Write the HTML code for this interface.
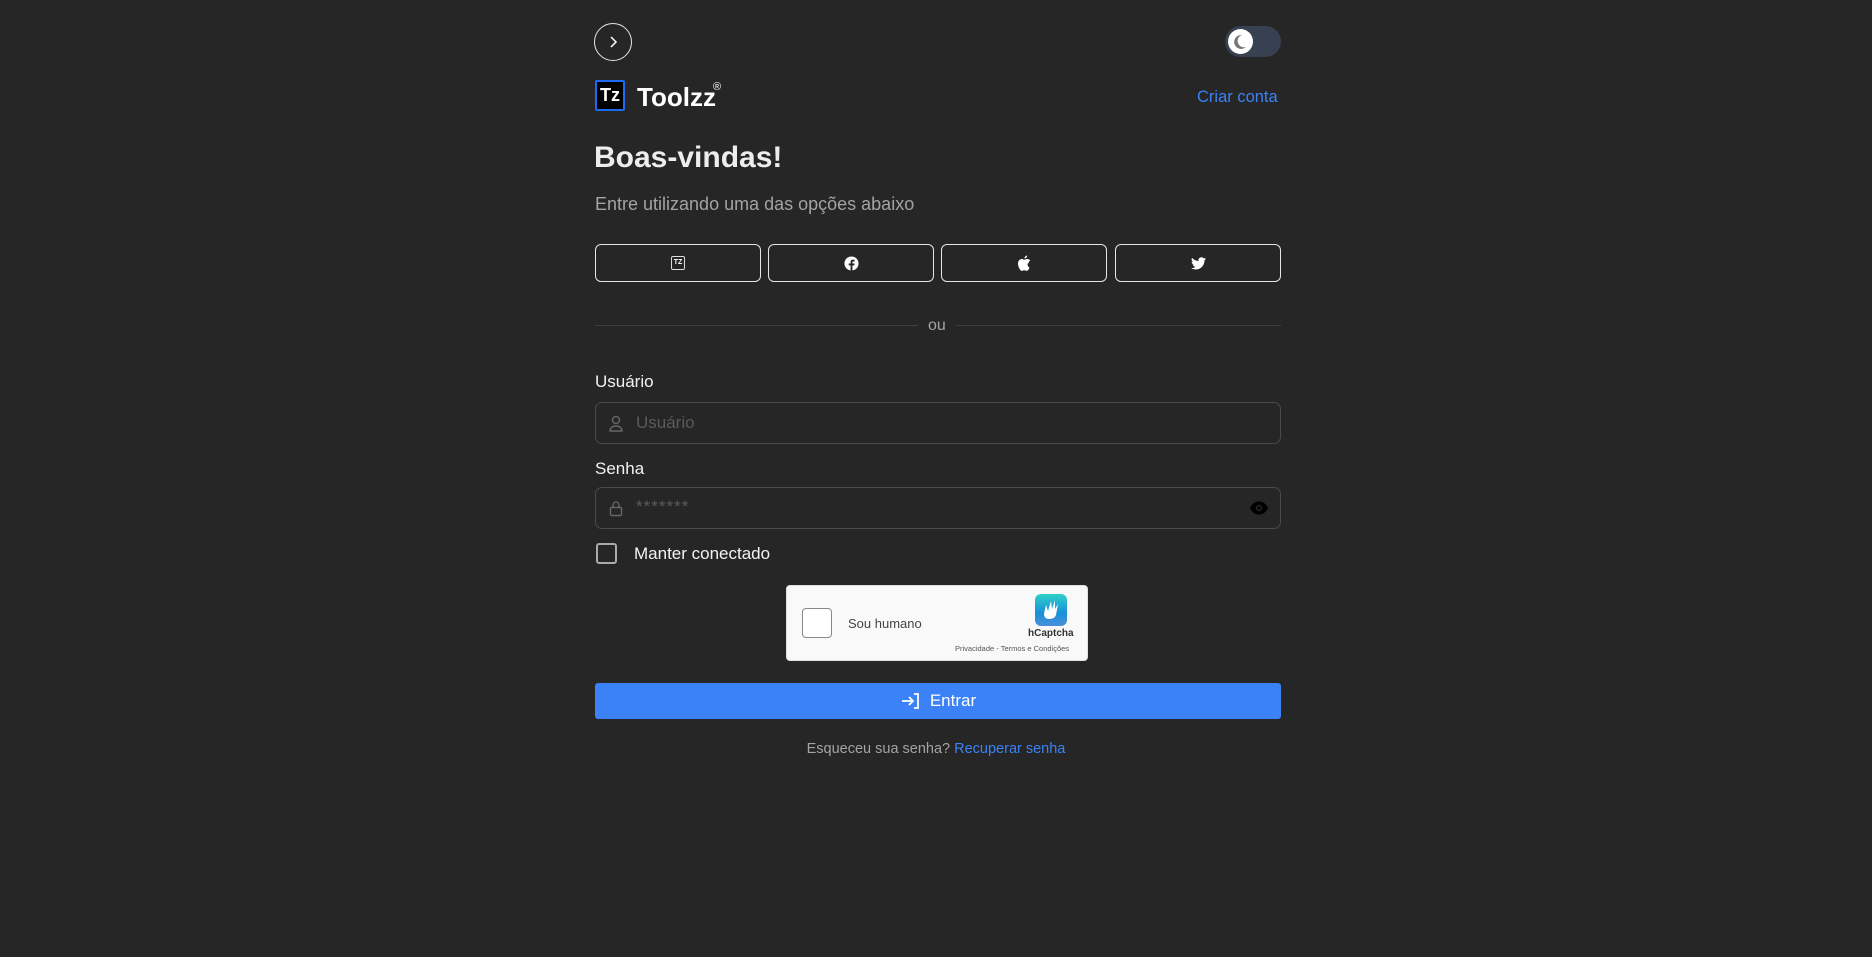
<!DOCTYPE html>
<html><head><meta charset="utf-8"><style>
*{box-sizing:border-box;margin:0;padding:0}
body{width:1872px;height:957px;background:#262626;font-family:"Liberation Sans",sans-serif;color:#fff;position:relative;overflow:hidden}
.a{position:absolute}
.sb{position:absolute;top:244px;height:38px;width:166px;border:1px solid #e5e5e5;border-radius:6px;display:flex;align-items:center;justify-content:center}
.inp{position:absolute;left:595px;width:686px;height:42px;border:1px solid #4a4a4a;border-radius:7px}
.lbl{position:absolute;left:595px;font-size:17px;color:#f2f2f2}
</style></head><body>
<div class="a" style="left:594px;top:23px;width:38px;height:38px;border:1.5px solid #e5e5e5;border-radius:50%"><svg width="38" height="38" viewBox="0 0 38 38" style="position:absolute;left:-1.5px;top:-1.5px"><path d="M17 14l5 5-5 5" stroke="#fff" stroke-width="1.5" fill="none"/></svg></div>
<div class="a" style="left:1225px;top:26px;width:56px;height:31px;border-radius:16px;background:#374151"><div class="a" style="left:3px;top:3px;width:25px;height:25px;border-radius:50%;background:#fff"><svg width="25" height="25" viewBox="0 0 25 25"><path d="M14 6a7 7 0 1 0 4 12a6 6 0 0 1-4-12z" fill="#777"/></svg></div></div>
<div class="a" style="left:595px;top:80px;width:30px;height:31px;border:2px solid #1d6bf2;border-radius:2px;background:#000;font-size:18px;font-weight:bold;text-align:center;line-height:26px">Tz</div>
<div class="a" style="left:637px;top:81px;font-size:26px;line-height:32px;font-weight:bold">Toolzz</div>
<div class="a" style="left:713px;top:81px;font-size:11px">®</div>
<div class="a" style="left:1197px;top:88px;font-size:16.5px;color:#3b82f6">Criar conta</div>
<div class="a" style="left:594px;top:141px;font-size:30px;font-weight:bold;color:#ededed">Boas-vindas!</div>
<div class="a" style="left:595px;top:194px;font-size:18px;color:#a3a3a3">Entre utilizando uma das opções abaixo</div>
<div class="sb" style="left:595px"><div style="width:14px;height:14px;border:1.5px solid #ddd;border-radius:2px;font-size:7px;font-weight:bold;text-align:center;line-height:11px">TZ</div></div>
<div class="sb" style="left:768px"><svg width="15" height="15" viewBox="0 0 16 16"><circle cx="8" cy="8" r="7.5" fill="#fff"/><path d="M9 16V10h2l.3-2H9V6.8c0-.6.3-1 1-1h1.3V4c-.4 0-1-.1-1.7-.1C8 3.9 7 4.9 7 6.5V8H5v2h2v6z" fill="#262626"/></svg></div>
<div class="sb" style="left:941px"><svg width="14" height="16" viewBox="0 0 14 16"><path d="M11.5 8.5c0-2 1.6-2.9 1.7-3-1-1.4-2.4-1.5-2.9-1.5-1.2-.1-2.3.7-2.9.7-.6 0-1.5-.7-2.5-.7C3.6 4 1 5 1 8.6c0 1.1.2 2.2.6 3.3.6 1.600 2 4.1 3.3 4 .8 0 1.300-.6 2.4-.6 1 0 1.5.6 2.4.6 1.3 0 2.4-2.2 2.8-3.4-1.5-.7-2-2-2-4zM9.5 2.5C10.2 1.7 10.1.8 10.1.5c-.6 0-1.4.4-1.9 1-.5.6-.8 1.3-.7 2 .7 0 1.4-.4 2-1z" fill="#fff"/></svg></div>
<div class="sb" style="left:1115px"><svg width="15" height="13" viewBox="0 0 24 20"><path d="M24 2.4c-.9.4-1.8.6-2.8.8 1-.6 1.8-1.6 2.2-2.7-1 .6-2 1-3.1 1.2A4.9 4.9 0 0 0 11.9 6C7.8 5.8 4.2 3.9 1.7.9a4.9 4.9 0 0 0 1.5 6.6c-.8 0-1.6-.3-2.2-.6 0 2.4 1.7 4.4 3.9 4.8-.7.2-1.5.2-2.2.1.6 2 2.4 3.4 4.6 3.4A9.9 9.9 0 0 1 0 17.3 14 14 0 0 0 7.5 19.5c9.1 0 14-7.5 14-14v-.6c1-.7 1.8-1.6 2.5-2.5z" fill="#fff"/></svg></div>
<div class="a" style="left:595px;top:325px;width:323px;height:1px;background:#3f3f3f"></div>
<div class="a" style="left:956px;top:325px;width:325px;height:1px;background:#3f3f3f"></div>
<div class="a" style="left:928px;top:317px;font-size:16px;color:#a3a3a3">ou</div>
<div class="lbl" style="top:372px">Usuário</div>
<div class="inp" style="top:402px"><svg class="a" style="left:11px;top:11px" width="18" height="20" viewBox="0 0 18 20"><circle cx="9" cy="6" r="3.5" stroke="#666" stroke-width="1.4" fill="none"/><path d="M3 17c0-3 2.5-5 6-5s6 2 6 5z" stroke="#666" stroke-width="1.4" fill="none"/></svg><div class="a" style="left:40px;top:10px;font-size:17px;color:#5a5a5a">Usuário</div></div>
<div class="lbl" style="top:459px">Senha</div>
<div class="inp" style="top:487px"><svg class="a" style="left:11px;top:11px" width="18" height="20" viewBox="0 0 18 20"><rect x="3.5" y="8.5" width="11" height="8" rx="1" stroke="#666" stroke-width="1.4" fill="none"/><path d="M6 8.5V6a3 3 0 0 1 6 0v2.5" stroke="#666" stroke-width="1.4" fill="none"/></svg><div class="a" style="left:40px;top:9px;font-size:17px;color:#5a5a5a;letter-spacing:1px">*******</div><svg class="a" style="left:653px;top:11px" width="20" height="18" viewBox="0 0 20 18"><path d="M1 9c2-4.5 5.5-6.5 9-6.5s7 2 9 6.5c-2 4.5-5.5 6.5-9 6.5s-7-2-9-6.5z" fill="#000"/><circle cx="10" cy="9" r="3.2" fill="#262626"/><circle cx="10" cy="9" r="1.8" fill="#000"/></svg></div>
<div class="a" style="left:596px;top:543px;width:21px;height:21px;border:2px solid #aaa;border-radius:3px"></div>
<div class="a" style="left:634px;top:544px;font-size:17px;color:#f2f2f2">Manter conectado</div>
<div class="a" style="left:786px;top:585px;width:302px;height:76px;background:#f9f9f9;border:1px solid #e0e0e0;border-radius:4px">
<div class="a" style="left:15px;top:22px;width:30px;height:30px;border:1px solid #888;border-radius:4px;background:#fff"></div>
<div class="a" style="left:61px;top:30px;font-size:13px;color:#444">Sou humano</div>
<div class="a" style="left:248px;top:8px;width:32px;height:32px;border-radius:6px;background:linear-gradient(#2ed0c8,#1a8fd8 60%,#4a90d9)"><svg width="32" height="32" viewBox="0 0 32 32"><path d="M9 20l2-9 2 6 3-10 1 8 3-9 0 9 3-5-2 11c-1 3-4 4-7 4-3 0-5-2-5-5z" fill="#fff"/></svg></div>
<div class="a" style="left:241px;top:42px;font-size:10px;font-weight:bold;color:#333">hCaptcha</div>
<div class="a" style="left:168px;top:58px;font-size:7.5px;color:#555">Privacidade - Termos e Condições</div>
</div>
<div class="a" style="left:595px;top:683px;width:686px;height:36px;background:#3b82f6;border-radius:3px;display:flex;align-items:center;justify-content:center;font-size:17px"><svg width="22" height="20" viewBox="0 0 22 20" style="margin-right:8px"><path d="M2 10h11M9 6l4 4-4 4M14 3h4v14h-4" stroke="#fff" stroke-width="1.8" fill="none"/></svg>Entrar</div>
<div class="a" style="left:0;width:1872px;top:741px;text-align:center;font-size:14.5px;color:#a3a3a3">Esqueceu sua senha? <span style="color:#3b82f6">Recuperar senha</span></div>
</body></html>
